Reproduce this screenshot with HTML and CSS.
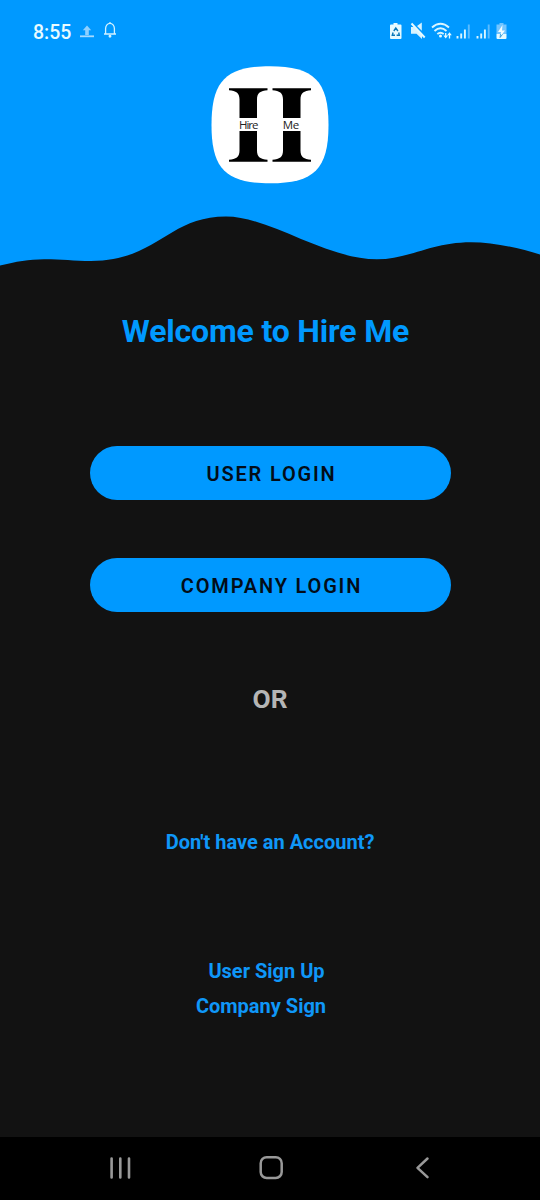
FILE: index.html
```html
<!DOCTYPE html>
<html lang="en">
<head>
<meta charset="utf-8">
<title>Hire Me</title>
<link rel="stylesheet" href="styles.css">
</head>
<body>
<div class="screen">
  <header class="hero">
    <div class="status">
      <div class="status-left">
        <span class="clock">8:55</span>
        <svg class="upload" width="16" height="14" viewBox="0 0 16 14"><path d="M8 .5l4.200 4.700H9.800V10H6.200V5.200H3.800z" fill="#8fd0ff"/><path d="M1 11.300h14" stroke="#a5daff" stroke-width="1.800"/></svg>
        <svg class="bell" width="14" height="18" viewBox="0 0 14 18" fill="none" stroke="#d3f1ff" stroke-width="1.300"><path d="M1 13h12M2.600 12.800V7.500a4.400 5.200 0 0 1 8.800 0v5.300M7 1v1.500"/><circle cx="7" cy="15.200" r=".8" fill="#d3f1ff"/></svg>
      </div>
      <svg class="status-right" width="120" height="20" viewBox="388 21 120 20" fill="none">
        <path d="M393.500 24.500V23h4v1.500h3a1 1 0 0 1 1 1V38a1 1 0 0 1-1 1h-9.500a1 1 0 0 1-1-1V25.500a1 1 0 0 1 1-1z" fill="#e6faff"/>
        <path d="M393.800 31l2-3 2.100 3M398.700 32.500l.6 2.700h-2.700M395 35.200h-2.700l.8-2.700" stroke="#0877b8" stroke-width="1.400"/>
        <path d="M411 27h2.600l8.400 7v5l-5.500-5.300H411zM417 26l4.800-3.500v8.200z" fill="#d7f3ff"/>
        <path d="M411.500 23.500l13.200 14" stroke="#e6faff" stroke-width="1.900"/>
        <g stroke="#d9f5ff" stroke-width="1.900"><path d="M432 27.500q8.500-7.500 17 0M434.500 31q6-5.300 12 0M437.300 34q3.200-2.600 6.400 0"/></g>
        <circle cx="440.500" cy="36" r="1.500" fill="#e6faff"/>
        <path d="M445.700 33v4M449.500 38.500v-4" stroke="#e6faff" stroke-width="1.300"/><path d="M443.400 35.600h4.600l-2.300 3zM447.200 35.300h4.600l-2.300-3z" fill="#e6faff"/>
        <g stroke="#d9f5ff" stroke-width="1.900"><path d="M457.500 38.500V36M461.200 38.500V33.500M464.900 38.500V29.500M477.500 38.500V36M481.200 38.500V33.500M484.900 38.500V29.500"/><path d="M468.800 38.500V24.500M488.700 38.500V24.500" stroke="#5bbcff"/></g>
        <path d="M499.500 24.500V23h4v1.500h3V34h-10v-9.500z" fill="#73c5ff"/><path d="M496.500 34h10v4a1 1 0 0 1-1 1h-8a1 1 0 0 1-1-1z" fill="#e6faff"/>
        <path d="M502.500 25l-4.500 7h3l-.8 5 4.800-6.500h-3z" fill="#f4fdff"/><path d="M500.500 34l-.4 3.500 2.500-3.300" stroke="#168bd3" stroke-width=".8"/>
      </svg>
    </div>
    <div class="logo">
      <svg width="118" height="118" viewBox="211 66 118 118">
        <path d="M270 66.200C314 66.200 328.500 81 328.500 125S314 183.300 270 183.300 211.500 169 211.500 125 226 66.200 270 66.200z" fill="#fff"/>
        <g id="pillar">
          <path d="M229 88.300h38.500v1.900c-7 .3-10.500 3-10.500 9v18.900h-17.500V99.200c0-6-3.500-8.700-10.500-9zM229 161.700h38.500v-1.900c-7-.3-10.500-3-10.500-9V131h-17.500v19.800c0 6-3.500 8.700-10.500 9z"/>
        </g>
        <use href="#pillar" x="43.500"/>
        <text class="logo-text" x="239" y="128.700" textLength="19.500">Hire</text>
        <text class="logo-text" x="282.700" y="128.700" textLength="16.500">Me</text>
      </svg>
    </div>
    <svg class="wave" width="540" height="70" viewBox="0 200 540 70"><path d="M0 265.500C16 261.500 29 259.300 44 259.200C60 259.100 74 260.900 91 260.900C157 260.900 168 216.500 226 216.500C270 216.500 325 259.300 377 259.300C409 259.300 431 242.200 471 242.200C494 242.200 520 248.500 540 254.500V270H0z" fill="#121212"/></svg>
  </header>
  <main class="content">
    <h1 class="title">Welcome to Hire Me</h1>
    <button class="login">USER LOGIN</button>
    <button class="login">COMPANY LOGIN</button>
    <p class="or">OR</p>
    <p class="question">Don't have an Account?</p>
    <a class="link link-user">User Sign Up</a>
    <a class="link link-company">Company Sign</a>
  </main>
  <nav class="navbar">
    <svg width="540" height="63" viewBox="0 1137 540 63" fill="none" stroke="#999" stroke-linecap="round" stroke-linejoin="round">
      <path d="M111.600 1158.500v19M120.300 1158.500v19M129 1158.500v19" stroke-width="2.600"/>
      <rect x="260.700" y="1157.200" width="21" height="20.800" rx="6" stroke-width="2.500"/>
      <path d="M427.500 1158.500l-10 9.300 10 9.400" stroke-width="2.500"/>
    </svg>
  </nav>
</div>
</body>
</html>
```
FILE: styles.css
```css
body { margin: 0; background: #121212; font-family: Roboto, sans-serif; }
.screen { width: 540px; height: 1200px; display: flex; flex-direction: column; overflow: hidden; background: #121212; }
.hero { height: 270px; flex: none; display: flex; flex-direction: column; align-items: center; background: #0099ff; }
.status { box-sizing: border-box; width: 100%; height: 66px; padding: 21px 32px 0 33px; display: flex; justify-content: space-between; align-items: flex-start; }
.status-left { display: flex; align-items: center; height: 21px; }
.clock { font-size: 19.500px; line-height: 21px; font-weight: 500; color: #e9fbff; padding-top: 1px; }
.upload { margin-left: 8px; }
.bell { margin-left: 8px; margin-top: -3px; }
.logo { height: 134px; }
.logo svg, .wave, .navbar svg { display: block; }
.logo-text { font: 11.500px "Open Sans", sans-serif; fill: #222; }
.content { flex: 1; display: flex; flex-direction: column; align-items: center; }
.title { margin: 41px 9px 95px 0; font-size: 32px; line-height: 40px; font-weight: 700; letter-spacing: -.17px; color: #0099ff; }
.login { width: 361px; height: 54px; margin: 0 0 58px; padding: 2px 0 0 3px; border: 0; border-radius: 27px; background: #0099ff; color: #030d18; font: 600 20px/24px Roboto, sans-serif; letter-spacing: 1.820px; }
.or { margin: 14px 0 116px; font-size: 26.300px; line-height: 30px; font-weight: 700; color: #b5b5b5; }
.question { margin: 0 0 105px; font-size: 20px; line-height: 24px; font-weight: 700; color: #0f97f8; }
.link { font-size: 20px; line-height: 24px; font-weight: 700; color: #0f97f8; }
.link-user { margin: 0 7px 11px 0; }
.link-company { margin-right: 18px; }
.navbar { height: 63px; flex: none; background: #000; }
```
